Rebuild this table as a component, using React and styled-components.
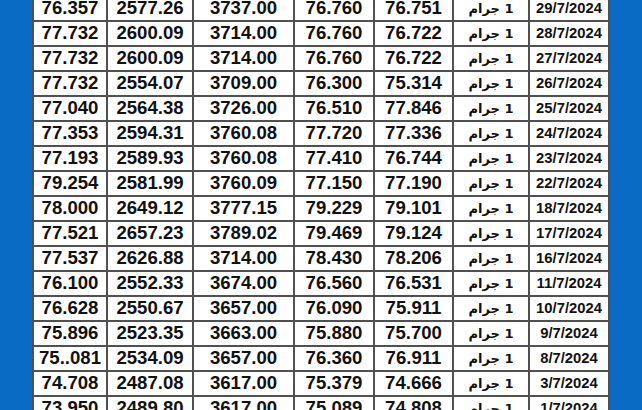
import React from "react";
import styled, { createGlobalStyle } from "styled-components";

const GlobalStyle = createGlobalStyle`
  html, body {
    margin: 0;
    padding: 0;
    background: #0a6bc4;
  }
  body {
    width: 642px;
    height: 410px;
    overflow: hidden;
    font-family: "Liberation Sans", "DejaVu Sans", Arial, sans-serif;
  }
`;

const Page = styled.div`
  display: flex;
  justify-content: center;
  height: 410px;
  overflow: hidden;
  padding: 0 32px;
`;

const Table = styled.div`
  display: grid;
  grid-template-columns: 72px 84px 99px 78px 77px 74px 78px;
  grid-auto-rows: 23px;
  gap: 2px;
  background: #505050;
  border: 2px solid #505050;
  border-top: none;
  margin-top: -3px;
  align-self: flex-start;
`;

const Cell = styled.div`
  background: #fff;
  color: #111;
  display: flex;
  align-items: center;
  justify-content: center;
  font-weight: bold;
  font-size: ${({ size }) => size || 18.6}px;
  white-space: nowrap;
  line-height: 1;
`;

const UnitCell = styled(Cell)`
  direction: rtl;
  font-size: 13px;
  font-family: "DejaVu Sans", "Liberation Sans", sans-serif;
`;

const rows = [
  ["76.357", "2577.26", "3737.00", "76.760", "76.751", "29/7/2024"],
  ["77.732", "2600.09", "3714.00", "76.760", "76.722", "28/7/2024"],
  ["77.732", "2600.09", "3714.00", "76.760", "76.722", "27/7/2024"],
  ["77.732", "2554.07", "3709.00", "76.300", "75.314", "26/7/2024"],
  ["77.040", "2564.38", "3726.00", "76.510", "77.846", "25/7/2024"],
  ["77.353", "2594.31", "3760.08", "77.720", "77.336", "24/7/2024"],
  ["77.193", "2589.93", "3760.08", "77.410", "76.744", "23/7/2024"],
  ["79.254", "2581.99", "3760.09", "77.150", "77.190", "22/7/2024"],
  ["78.000", "2649.12", "3777.15", "79.229", "79.101", "18/7/2024"],
  ["77.521", "2657.23", "3789.02", "79.469", "79.124", "17/7/2024"],
  ["77.537", "2626.88", "3714.00", "78.430", "78.206", "16/7/2024"],
  ["76.100", "2552.33", "3674.00", "76.560", "76.531", "11/7/2024"],
  ["76.628", "2550.67", "3657.00", "76.090", "75.911", "10/7/2024"],
  ["75.896", "2523.35", "3663.00", "75.880", "75.700", "9/7/2024"],
  ["75..081", "2534.09", "3657.00", "76.360", "76.911", "8/7/2024"],
  ["74.708", "2487.08", "3617.00", "75.379", "74.666", "3/7/2024"],
  ["73.950", "2489.80", "3617.00", "75.089", "74.808", "1/7/2024"],
];

const App = () => {
  return (
    <>
      <GlobalStyle />
      <Page>
        <Table>
          {rows.map((r, i) => (
            <React.Fragment key={i}>
              <Cell>{r[0]}</Cell>
              <Cell>{r[1]}</Cell>
              <Cell>{r[2]}</Cell>
              <Cell>{r[3]}</Cell>
              <Cell>{r[4]}</Cell>
              <UnitCell>1 جرام</UnitCell>
              <Cell size={14.8}>{r[5]}</Cell>
            </React.Fragment>
          ))}
        </Table>
      </Page>
    </>
  );
};

export default App;
